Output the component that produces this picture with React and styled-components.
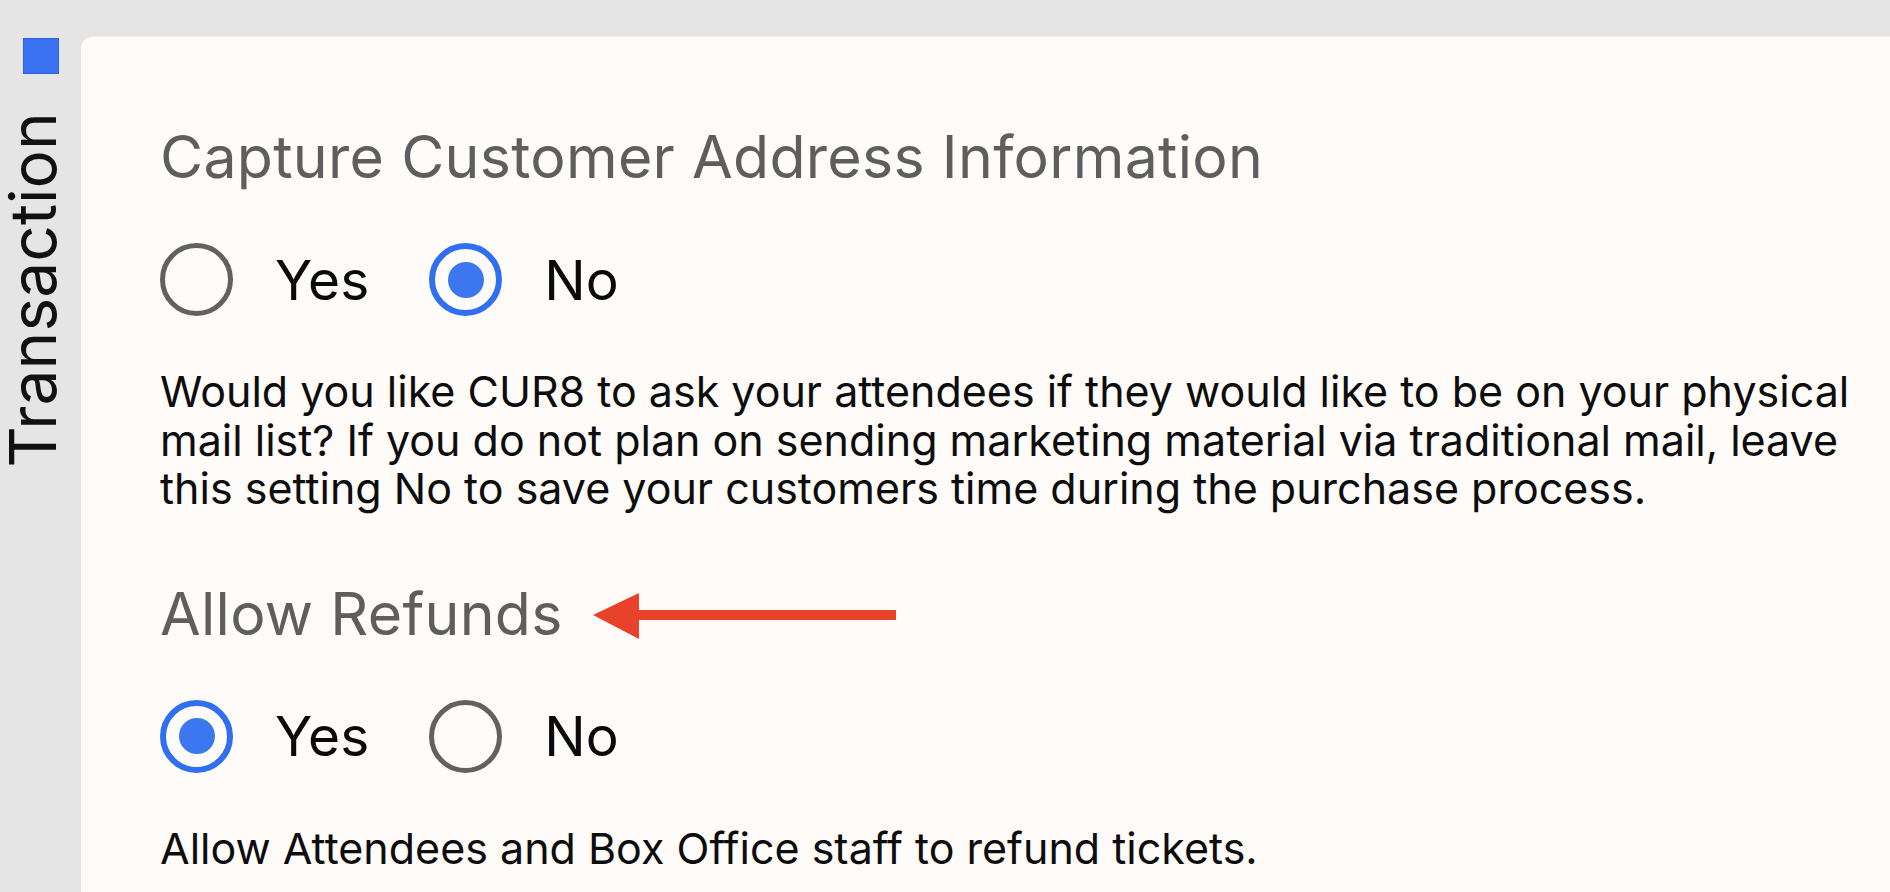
import React from 'react'
import styled, { createGlobalStyle } from 'styled-components'

const GlobalStyle = createGlobalStyle`
  html, body {
    margin: 0;
    padding: 0;
    background: #e5e5e5;
  }
  body {
    font-family: Inter, "Noto Sans", "Liberation Sans", sans-serif;
    overflow: hidden;
  }
`

const settings = [
  {
    title: 'Capture Customer Address Information',
    value: 'No',
    text: 'Would you like CUR8 to ask your attendees if they would like to be on your physical mail list? If you do not plan on sending marketing material via traditional mail, leave this setting No to save your customers time during the purchase process.',
  },
  {
    title: 'Allow Refunds',
    value: 'Yes',
    text: 'Allow Attendees and Box Office staff to refund tickets.',
    marked: true,
  },
]

const App = () => {
  return (
    <>
      <GlobalStyle />
      <Page>
        {/* left tab */}
        <Side>
          <Swatch />
          <SideLabel>Transaction</SideLabel>
        </Side>

        {/* settings card */}
        <Card>
          {settings.map((s) => (
            <Setting key={s.title}>
              <TitleRow>
                <Title>{s.title}</Title>
                {s.marked && (
                  <Arrow width="304" height="46" viewBox="0 0 304 46">
                    <polygon points="0,22 46,0 46,46" fill="#e8432a" />
                    <rect x="44" y="17" width="259" height="10" fill="#e8432a" />
                  </Arrow>
                )}
              </TitleRow>
              <Options>
                {['Yes', 'No'].map((opt) => (
                  <Option key={opt}>
                    <Radio $checked={s.value === opt} />
                    <OptionText>{opt}</OptionText>
                  </Option>
                ))}
              </Options>
              <Help>{s.text}</Help>
            </Setting>
          ))}
        </Card>
      </Page>
    </>
  )
}

export default App

const Page = styled.main`
  display: flex;
  width: 1890px;
  height: 892px;
  overflow: hidden;
`

const Side = styled.aside`
  width: 81px;
  flex-shrink: 0;
  display: flex;
  flex-direction: column;
  align-items: center;
  padding-top: 38px;
  box-sizing: border-box;
`

const Swatch = styled.div`
  width: 36px;
  height: 36px;
  box-sizing: border-box;
  background: #3b72f2;
  border: 1.5px solid #2a62ec;
`

const SideLabel = styled.div`
  writing-mode: vertical-rl;
  transform: rotate(180deg);
  margin-top: 38px;
  margin-right: 16px;
  font-size: 64px;
  line-height: 64px;
  color: #111;
  letter-spacing: 0.1px;
`

const Card = styled.section`
  flex: 1;
  margin-top: 37px;
  background: #fffbf9;
  border-top-left-radius: 12px;
  box-shadow: 0 -1px 0 #ececec;
  padding: 85px 0 0 79px;
  display: flex;
  flex-direction: column;
  gap: 66px;
`

const Setting = styled.div`
  display: flex;
  flex-direction: column;
`

const TitleRow = styled.div`
  display: flex;
  align-items: center;
  gap: 30px;
`

const Title = styled.h2`
  margin: 0;
  font-size: 59px;
  line-height: 70px;
  font-weight: 400;
  color: #5e5e5e;
  letter-spacing: 0.3px;
`

const Arrow = styled.svg`
  display: block;
  margin-top: 4px;
`

const Options = styled.div`
  display: flex;
  align-items: center;
  gap: 60px;
  margin-top: 51px;
  height: 73px;
`

const Option = styled.label`
  display: flex;
  align-items: center;
  gap: 42px;
  cursor: pointer;
`

const Radio = styled.span`
  width: 73px;
  height: 73px;
  box-sizing: border-box;
  border-radius: 50%;
  border: ${(p) => (p.$checked ? '6px solid #2f6ff0' : '5px solid #616161')};
  display: flex;
  align-items: center;
  justify-content: center;

  &::after {
    content: '';
    width: 36px;
    height: 36px;
    border-radius: 50%;
    background: #3b78ef;
    display: ${(p) => (p.$checked ? 'block' : 'none')};
  }
`

const OptionText = styled.span`
  font-size: 55px;
  line-height: 64px;
  color: #0a0a0a;
`

const Help = styled.p`
  margin: 51px 0 0;
  font-size: 43px;
  line-height: 48.5px;
  color: #0d0d0d;
  max-width: 1728px;
`
